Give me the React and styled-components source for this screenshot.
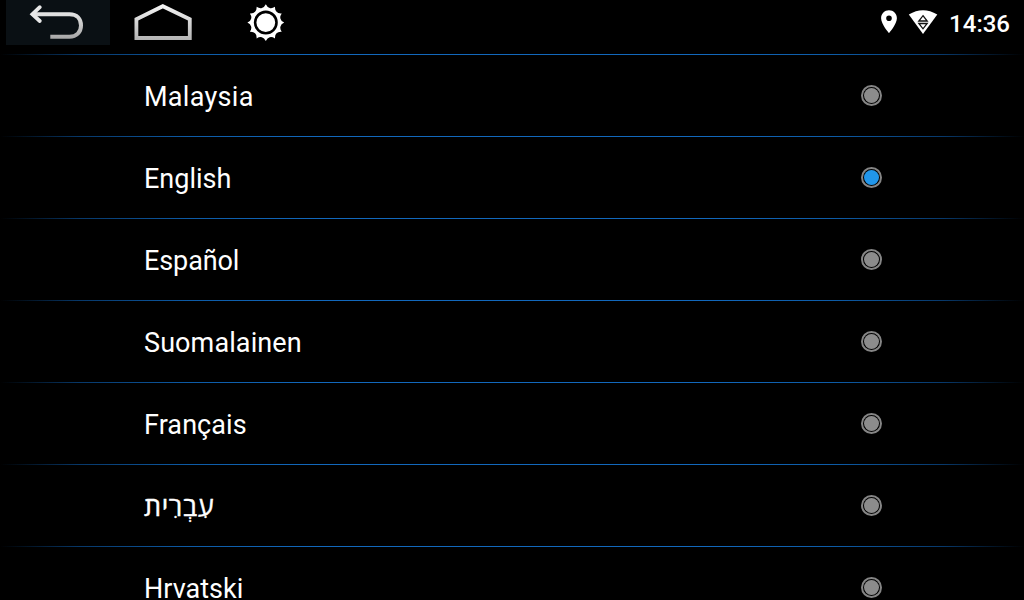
import React from "react";
import styled, { createGlobalStyle } from "styled-components";

const GlobalStyle = createGlobalStyle`
    body {
        margin: 0;
        background-color: #000;
        overflow: hidden;
    }
`;

const Screen = styled.div`
    width: 1024px;
    height: 600px;
    overflow: hidden;
    display: flex;
    flex-flow: column nowrap;
    background-color: #000;
    color: #fff;
    font-family: Roboto, "Open Sans", "Noto Sans", "DejaVu Sans", sans-serif;
`;

const StatusBar = styled.header`
    flex: none;
    height: 54px;
    padding: 0 14px 0 6px;
    box-sizing: border-box;
    display: flex;
    justify-content: space-between;
    align-items: flex-start;
`;

const BarGroup = styled.div`
    height: 45px;
    display: flex;
    align-items: center;
`;

const BarButton = styled.button`
    width: ${({ width }) => width};
    height: 45px;
    padding: 0;
    border: none;
    background-color: ${({ $active }) => ($active ? "#0a1014" : "transparent")};

    svg {
        display: block;
    }
`;

const StatusIcon = styled.svg`
    display: block;
    margin-right: ${({ $gap }) => $gap};
`;

const Clock = styled.span`
    font-size: 24px;
    font-weight: 500;
    line-height: 45px;
    padding-top: 3px;
`;

const LanguageList = styled.ul`
    margin: 0;
    padding: 0;
    list-style: none;
`;

const LanguageItem = styled.li`
    height: 82px;
    padding: 1px 142px 0 144px;
    box-sizing: border-box;
    display: flex;
    justify-content: space-between;
    align-items: center;
    background: linear-gradient(
        to right,
        #000 0,
        #07386a 80px,
        #0d5ba6 190px,
        #1268bc 320px,
        #1268bc 704px,
        #0d5ba6 834px,
        #07386a 944px,
        #000 1024px
    ) top / 100% 1px no-repeat;
`;

const LanguageName = styled.span`
    font-size: ${({ $size }) => $size || "27px"};
    line-height: 32px;
    letter-spacing: ${({ $spacing }) => $spacing || "normal"};
    padding-top: 3px;
    -webkit-text-stroke: ${({ $stroke }) => $stroke || "0"} #fff;
`;

const Radio = styled.span`
    width: 21px;
    height: 21px;
    box-sizing: border-box;
    border: 2px solid #858585;
    border-radius: 50%;
    display: flex;
    justify-content: center;
    align-items: center;

    &::after {
        content: "";
        width: 15px;
        height: 15px;
        border-radius: 50%;
        background-color: ${({ $checked }) => ($checked ? "#2196ea" : "#8c8c8c")};
    }
`;

const languages = [
    { name: "Malaysia", spacing: "0.3px" },
    { name: "English" },
    { name: "Español", spacing: "-0.1px" },
    { name: "Suomalainen", spacing: "0.1px" },
    { name: "Français", spacing: "0.08px" },
    { name: "עִבְרִית", size: "27px", spacing: "0.6px", stroke: "0.4px" },
    { name: "Hrvatski" },
];

// 12 rays around the sun
const rays = Array.from({ length: 12 }, (_, i) => {
    const point = (radius, degree) => {
        const rad = (degree * Math.PI) / 180;
        return `${(radius * Math.cos(rad)).toFixed(2)} ${(radius * Math.sin(rad)).toFixed(2)}`;
    };
    return `${i === 0 ? "M" : "L"}${point(18.4, i * 30)}Q${point(15.2, i * 30 + 6)} ${point(15.2, i * 30 + 15)}Q${point(15.2, i * 30 + 24)} ${point(18.4, i * 30 + 30)}`;
}).join("") + "Z";

const BackIcon = () => (
    <svg width="104" height="45" viewBox="6 0 104 45" fill="none">
        <defs>
            <linearGradient id="back" gradientUnits="userSpaceOnUse" x1="0" y1="6" x2="0" y2="39">
                <stop offset="0" stopColor="#f4f4f4" />
                <stop offset="1" stopColor="#a6a6a6" />
            </linearGradient>
        </defs>
        <path d="M33 14.3H69.5C77 14.3 81 18.8 81 25.5S76.5 36.7 69.5 36.7H50.3" stroke="url(#back)" strokeWidth="4" />
        <path d="M39.8 7.2L32.4 14.2L39.8 21" stroke="#e8e8e8" strokeWidth="3.8" strokeLinecap="round" />
    </svg>
);

const HomeIcon = () => (
    <svg width="104" height="45" viewBox="110 0 104 45" fill="none">
        <defs>
            <linearGradient id="home" gradientUnits="userSpaceOnUse" x1="0" y1="4" x2="0" y2="40">
                <stop offset="0" stopColor="#f6f6f6" />
                <stop offset="1" stopColor="#b4b4b4" />
            </linearGradient>
        </defs>
        <path d="M136.4 19.2L162.8 6.2L189.8 19.2V38H136.4Z" stroke="url(#home)" strokeWidth="3.8" />
    </svg>
);

const SunIcon = () => (
    <svg width="104" height="45" viewBox="214 0 104 45">
        <g transform="translate(265.8 22.6)">
            <path d={rays} fill="#fff" />
            <circle r="10.7" fill="#fff" stroke="#000" strokeWidth="2.6" />
        </g>
    </svg>
);

const LocationIcon = () => (
    <StatusIcon width="18" height="45" viewBox="880 0 18 45" $gap="10px">
        <path
            d="M889 10.3C884.6 10.3 881.1 13.8 881.1 18.2C881.1 24.2 889 33 889 33S896.9 24.2 896.9 18.2C896.9 13.8 893.4 10.3 889 10.3ZM889 21A2.8 2.8 0 1 1 889 15.4A2.8 2.8 0 0 1 889 21Z"
            fill="#fff"
        />
    </StatusIcon>
);

const WifiIcon = () => (
    <StatusIcon width="30" height="45" viewBox="908 0 30 45" $gap="11px">
        <path d="M908.8 14.6Q923 5.8 937.3 14.6L923 34Z" fill="#fff" />
        <path d="M923 15.7L927.2 21H918.8ZM918.8 23.5H927.2L923 28.8Z" fill="none" stroke="#111" strokeWidth="1.3" />
    </StatusIcon>
);

const App = () => {

    const [selected, setSelected] = React.useState("English");

    return (
        <Screen>
            <GlobalStyle />
            <StatusBar>
                <BarGroup>
                    <BarButton width="104px" $active><BackIcon /></BarButton>
                    <BarButton width="104px"><HomeIcon /></BarButton>
                    <BarButton width="104px"><SunIcon /></BarButton>
                </BarGroup>
                <BarGroup>
                    <LocationIcon />
                    <WifiIcon />
                    <Clock>14:36</Clock>
                </BarGroup>
            </StatusBar>
            <LanguageList>
                {
                    languages.map(({ name, size, spacing, stroke }) => (
                        <LanguageItem key={name} onClick={() => setSelected(name)}>
                            <LanguageName $size={size} $spacing={spacing} $stroke={stroke}>{name}</LanguageName>
                            <Radio $checked={name === selected} />
                        </LanguageItem>
                    ))
                }
            </LanguageList>
        </Screen>
    );
}

export default App;
